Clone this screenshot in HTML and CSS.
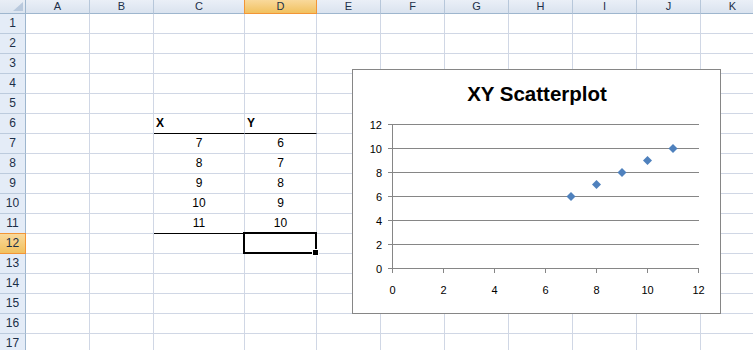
FILE: index.html
```html
<!DOCTYPE html>
<html lang="en">
<head>
  <meta charset="UTF-8" />
  <title>XY Scatterplot</title>
  <link rel="stylesheet" href="styles.css">
</head>
<body>
  <div class="workbook">
    <div class="sheet">
      <div class="corner"></div>
      <div class="col">A</div><div class="col">B</div><div class="col">C</div><div class="col active">D</div><div class="col">E</div><div class="col">F</div><div class="col">G</div><div class="col">H</div><div class="col">I</div><div class="col">J</div><div class="col">K</div>

      <div class="row">1</div><div></div><div></div><div></div><div></div><div></div><div></div><div></div><div></div><div></div><div></div><div></div>
      <div class="row">2</div><div></div><div></div><div></div><div></div><div></div><div></div><div></div><div></div><div></div><div></div><div></div>
      <div class="row">3</div><div></div><div></div><div></div><div></div><div></div><div></div><div></div><div></div><div></div><div></div><div></div>
      <div class="row">4</div><div></div><div></div><div></div><div></div><div></div><div></div><div></div><div></div><div></div><div></div><div></div>
      <div class="row">5</div><div></div><div></div><div></div><div></div><div></div><div></div><div></div><div></div><div></div><div></div><div></div>
      <div class="row">6</div><div></div><div></div><div class="label ruled">X</div><div class="label ruled">Y</div><div></div><div></div><div></div><div></div><div></div><div></div><div></div>
      <div class="row">7</div><div></div><div></div><div class="num">7</div><div class="num">6</div><div></div><div></div><div></div><div></div><div></div><div></div><div></div>
      <div class="row">8</div><div></div><div></div><div class="num">8</div><div class="num">7</div><div></div><div></div><div></div><div></div><div></div><div></div><div></div>
      <div class="row">9</div><div></div><div></div><div class="num">9</div><div class="num">8</div><div></div><div></div><div></div><div></div><div></div><div></div><div></div>
      <div class="row">10</div><div></div><div></div><div class="num">10</div><div class="num">9</div><div></div><div></div><div></div><div></div><div></div><div></div><div></div>
      <div class="row">11</div><div></div><div></div><div class="num ruled">11</div><div class="num ruled">10</div><div></div><div></div><div></div><div></div><div></div><div></div><div></div>
      <div class="row active">12</div><div></div><div></div><div></div><div class="selected"></div><div></div><div></div><div></div><div></div><div></div><div></div><div></div>
      <div class="row">13</div><div></div><div></div><div></div><div></div><div></div><div></div><div></div><div></div><div></div><div></div><div></div>
      <div class="row">14</div><div></div><div></div><div></div><div></div><div></div><div></div><div></div><div></div><div></div><div></div><div></div>
      <div class="row">15</div><div></div><div></div><div></div><div></div><div></div><div></div><div></div><div></div><div></div><div></div><div></div>
      <div class="row">16</div><div></div><div></div><div></div><div></div><div></div><div></div><div></div><div></div><div></div><div></div><div></div>
      <div class="row">17</div><div></div><div></div><div></div><div></div><div></div><div></div><div></div><div></div><div></div><div></div><div></div>
    </div>

    <!-- chart floats over the cells -->
    <div class="chart">
      <svg width="367" height="243" viewBox="0 0 367 243">
        <text class="chart-title" x="184" y="31" text-anchor="middle">XY Scatterplot</text>
        <g stroke="#868686" stroke-width="1" fill="none">
          <path d="M35 54.5H346M35 78.5H346M35 102.5H346M35 126.5H346M35 150.5H346M35 174.5H346M35 198.5H346" />
          <path d="M39.5 54V203M90.5 198.5V203M141.5 198.5V203M192.5 198.5V203M243.5 198.5V203M294.5 198.5V203M345.5 198.5V203" />
        </g>
        <g class="tick" text-anchor="end">
          <text x="29" y="58.5">12</text>
          <text x="29" y="82.5">10</text>
          <text x="29" y="106.5">8</text>
          <text x="29" y="130.5">6</text>
          <text x="29" y="154.5">4</text>
          <text x="29" y="178.5">2</text>
          <text x="29" y="202.5">0</text>
        </g>
        <g class="tick" text-anchor="middle">
          <text x="39.5" y="224">0</text>
          <text x="90.5" y="224">2</text>
          <text x="141.5" y="224">4</text>
          <text x="192.5" y="224">6</text>
          <text x="243.5" y="224">8</text>
          <text x="294.5" y="224">10</text>
          <text x="345.5" y="224">12</text>
        </g>
        <g fill="#4f81bd">
          <path d="M0-4.5L4.5 0 0 4.5-4.5 0Z" transform="translate(218 126.5)" />
          <path d="M0-4.5L4.5 0 0 4.5-4.5 0Z" transform="translate(243.5 114.5)" />
          <path d="M0-4.5L4.5 0 0 4.5-4.5 0Z" transform="translate(269 102.5)" />
          <path d="M0-4.5L4.5 0 0 4.5-4.5 0Z" transform="translate(294.5 90.5)" />
          <path d="M0-4.5L4.5 0 0 4.5-4.5 0Z" transform="translate(320 78.5)" />
        </g>
      </svg>
    </div>
  </div>
</body>
</html>
```

FILE: styles.css
```css
body {
  margin: 0;
  background: #ffffff;
  overflow: hidden;
  font-family: "Liberation Sans", Arial, sans-serif;
}

.workbook {
  position: relative;
}

.sheet {
  display: grid;
  grid-template-columns: 26px 64px 64px 91px 72px repeat(7, 64px);
  grid-template-rows: 14px repeat(17, 20px);
  font-size: 12px;
  color: #000;
}

.sheet > div {
  box-sizing: border-box;
  border-right: 1px solid #d0d7e5;
  border-bottom: 1px solid #d0d7e5;
  line-height: 19px;
  white-space: nowrap;
}

.sheet .corner {
  position: relative;
  background: linear-gradient(#e9eef6, #dbe4ef);
  border-right: 1px solid #9eb6ce;
  border-bottom: 1px solid #9eb6ce;
}

.sheet .corner::after {
  content: "";
  position: absolute;
  right: 2px;
  bottom: 2px;
  border-style: solid;
  border-width: 0 0 9px 10px;
  border-color: transparent transparent #b9c9dd transparent;
}

.sheet .col {
  background: linear-gradient(#eaeff7, #dae3ef);
  border-right: 1px solid #b7c7da;
  border-bottom: 1px solid #9eb6ce;
  color: #1c2f48;
  text-align: center;
  font-size: 11px;
  line-height: 12px;
}

.sheet .row {
  background: #e4ecf7;
  border-right: 1px solid #9eb6ce;
  border-bottom: 1px solid #bccbdd;
  color: #1c2f48;
  text-align: center;
}

.sheet .col.active,
.sheet .row.active {
  background: linear-gradient(#f9d99b, #f1c15f);
  border-right-color: #f29536;
  border-bottom-color: #f29536;
}

.sheet .col.active {
  box-shadow: -1px 0 0 #f29536;
}

.sheet .row.active {
  box-shadow: 0 -1px 0 #f29536;
}

.sheet .label {
  font-weight: bold;
  padding-left: 2px;
}

.sheet .num {
  text-align: center;
}

.sheet .ruled {
  border-bottom-color: #000;
}

.sheet .selected {
  position: relative;
}

.sheet .selected::before {
  content: "";
  position: absolute;
  left: -2px;
  top: -2px;
  right: -1px;
  bottom: -1px;
  border: 2px solid #000;
}

.sheet .selected::after {
  content: "";
  position: absolute;
  right: -2px;
  bottom: -2px;
  width: 5px;
  height: 5px;
  background: #000;
  box-shadow: 0 0 0 1px #fff;
}

.chart {
  position: absolute;
  left: 352px;
  top: 69px;
  width: 369px;
  height: 245px;
  box-sizing: border-box;
  border: 1px solid #868686;
  background: #fff;
}

.chart svg {
  display: block;
}

.chart-title {
  font-family: "Liberation Sans", Arial, sans-serif;
  font-size: 20.5px;
  font-weight: bold;
  fill: #000;
}

.tick text {
  font-family: "Liberation Sans", Arial, sans-serif;
  font-size: 11px;
  fill: #000;
}
```
